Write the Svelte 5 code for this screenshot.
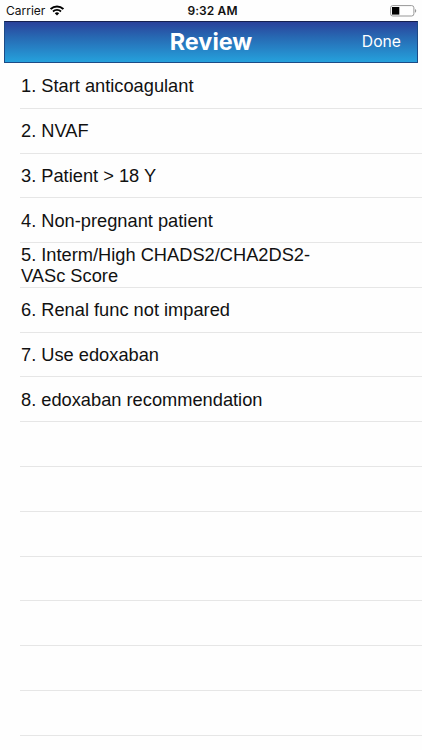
<script>
  const items = [
    'Start anticoagulant',
    'NVAF',
    'Patient > 18 Y',
    'Non-pregnant patient',
    'Interm/High CHADS2/CHA2DS2-VASc Score',
    'Renal func not impared',
    'Use edoxaban',
    'edoxaban recommendation'
  ];

  // the table keeps drawing separators below the last item
  const rowCount = 15;
  const rows = Array.from({ length: rowCount }, (_, i) => items[i] ?? '');
</script>

<div class="screen">
  <div class="status-bar">
    <div class="carrier">
      <span>Carrier</span>
      <svg width="14" height="11" viewBox="0 0 14 11">
        <path d="M0.6 4.1C4.2 0.6 9.8 0.6 13.4 4.1" fill="none" stroke="#000" stroke-width="2" />
        <path d="M3 6.5C5.2 4.4 8.8 4.4 11 6.5" fill="none" stroke="#000" stroke-width="1.8" />
        <path d="M4.8 8.2C6.1 7 7.9 7 9.2 8.2L7 10.4Z" fill="#000" />
      </svg>
    </div>
    <span class="time">9:32 AM</span>
    <svg class="battery" width="27" height="12" viewBox="0 0 27 12">
      <rect x="0.6" y="0.6" width="23.3" height="10.4" rx="2.2" fill="#fff" stroke="#989898" stroke-width="1" />
      <rect x="2" y="2" width="7.3" height="7.6" fill="#000" />
      <path d="M25 4.1C26.7 4.6 26.7 7.2 25 7.7Z" fill="#989898" />
    </svg>
  </div>

  <header class="nav-bar">
    <h1>Review</h1>
    <button>Done</button>
  </header>

  <ul class="list">
    {#each rows as item, i}
      <li class="row">
        {#if item}
          <span class="label">{i + 1}. {item}</span>
        {/if}
      </li>
    {/each}
  </ul>
</div>

<style>
  :global(body) {
    background: #fefefe;
  }

  .screen {
    width: 422px;
    height: 750px;
    overflow: hidden;
    background: #fefefe;
    color: #111;
    font-family: 'Liberation Sans', Arial, sans-serif;
  }

  .status-bar {
    display: grid;
    grid-template-columns: 1fr auto 1fr;
    align-items: center;
    box-sizing: border-box;
    height: 21px;
    padding: 0 5px 0 6px;
    font-family: Inter, sans-serif;
    font-size: 12px;
  }

  .carrier {
    display: flex;
    align-items: center;
    gap: 5px;
  }

  .time {
    padding-left: 2px;
    font-weight: 600;
    letter-spacing: 0.1px;
  }

  .battery {
    justify-self: end;
  }

  .nav-bar {
    display: grid;
    grid-template-columns: 1fr auto 1fr;
    align-items: center;
    box-sizing: border-box;
    height: 42.4px;
    margin: 0 4px 0 4px;
    padding: 0 16px 2px;
    border: 1px solid #1c4a86;
    border-top-color: #16204f;
    background: linear-gradient(#2a419a, #2769b3 38%, #25a1dc);
    color: #fff;
    font-family: Inter, sans-serif;
  }

  h1 {
    grid-column: 2;
    margin: 0;
    font-size: 23.4px;
    font-weight: 700;
  }

  button {
    justify-self: end;
    padding: 0;
    border: none;
    background: none;
    color: #fff;
    font-family: inherit;
    font-size: 15.7px;
  }

  .list {
    margin: 0;
    padding: 0.7px 0 0 20px;
    list-style: none;
  }

  .row {
    display: flex;
    align-items: center;
    box-sizing: border-box;
    height: 44.78px;
    border-bottom: 1px solid #e6e6e6;
  }

  .label {
    width: 310px;
    padding-left: 1px;
    font-size: 18.25px;
    line-height: 21px;
  }
</style>
